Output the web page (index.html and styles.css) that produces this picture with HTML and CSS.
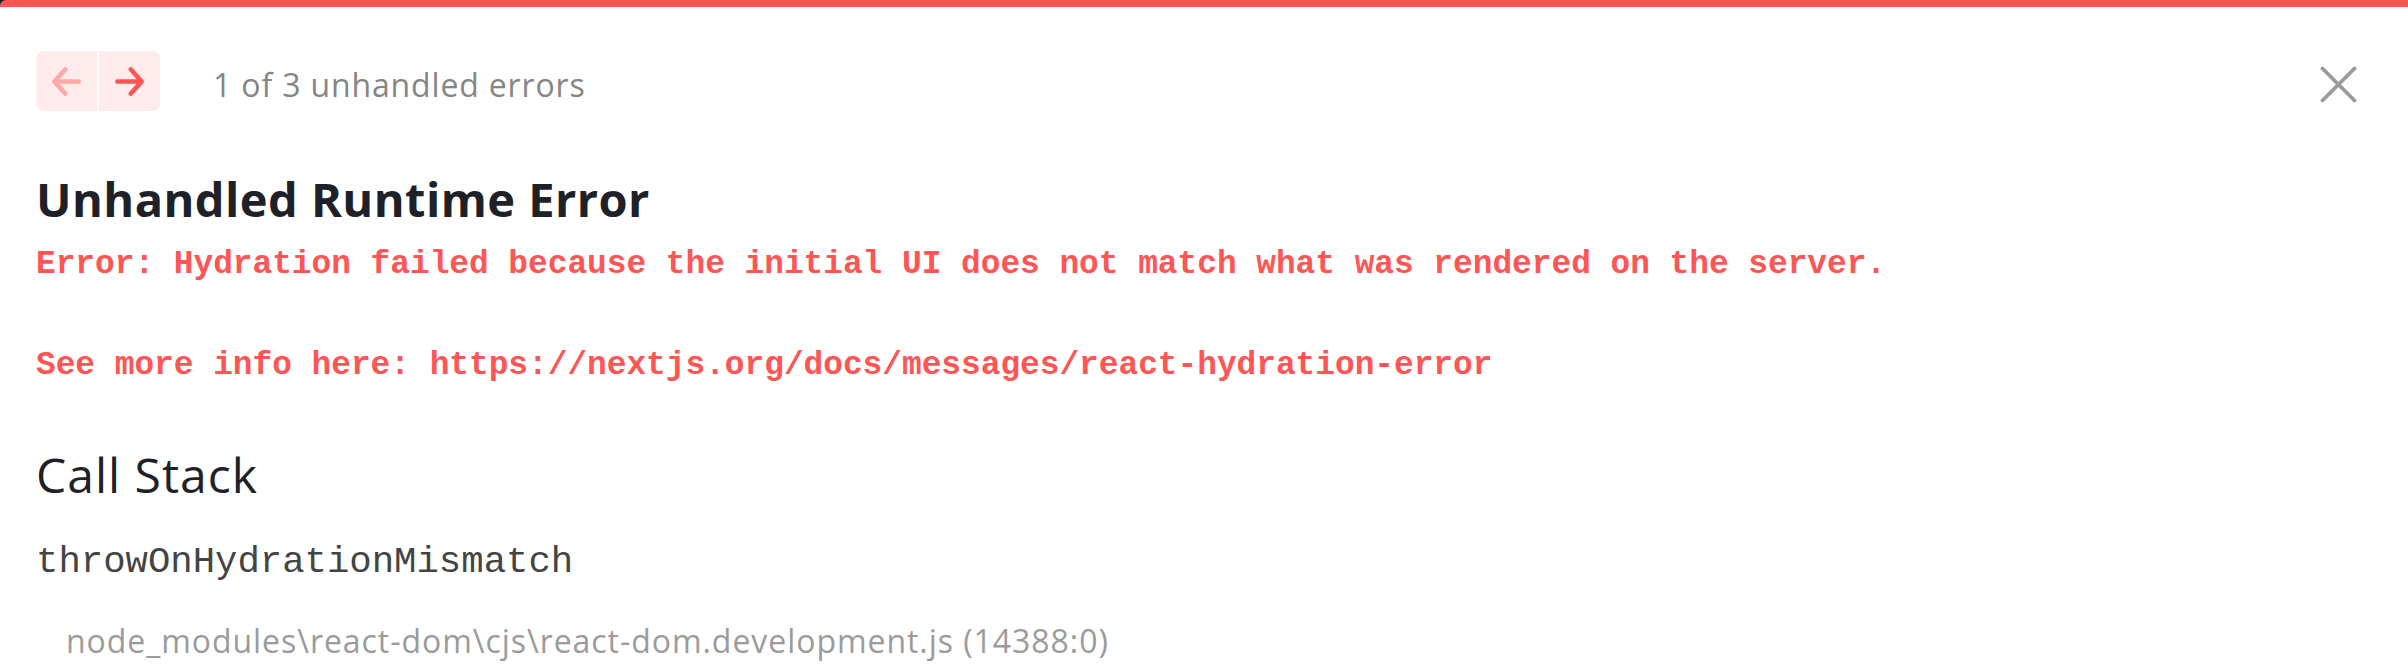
FILE: index.html
```html
<!DOCTYPE html>
<html lang="en">
<head>
<meta charset="utf-8">
<title>Unhandled Runtime Error</title>
<link rel="stylesheet" href="styles.css">
</head>
<body>
<div class="dialog">
  <header class="dialog-header">
    <div class="nav-group">
      <nav class="pager">
        <button class="pager-btn pager-prev" type="button" aria-label="previous" disabled>
          <svg width="31" height="31" viewBox="0 0 14 14" fill="none"><path d="M6.5 1.5L1.5 7L6.5 12.5M1.5 7H12.5" stroke="currentColor" stroke-width="2" stroke-linecap="round" stroke-linejoin="round"/></svg>
        </button>
        <button class="pager-btn pager-next" type="button" aria-label="next">
          <svg width="31" height="31" viewBox="0 0 14 14" fill="none"><path d="M7.5 1.5L12.5 7L7.5 12.5M12.5 7H1.5" stroke="currentColor" stroke-width="2" stroke-linecap="round" stroke-linejoin="round"/></svg>
        </button>
      </nav>
      <span class="pager-label">1 of 3 unhandled errors</span>
    </div>
    <button class="close-btn" type="button" aria-label="close">
      <svg width="37" height="37" viewBox="0 0 37 37" fill="none"><path d="M2.5 2.5L34.5 34.5M34.5 2.5L2.5 34.5" stroke="currentColor" stroke-width="3.8" stroke-linecap="round"/></svg>
    </button>
  </header>
  <section class="dialog-body">
    <h1 class="title">Unhandled Runtime Error</h1>
    <p class="error-message">Error: Hydration failed because the initial UI does not match what was rendered on the server.

See more info here: https://nextjs.org/docs/messages/react-hydration-error</p>
    <h2 class="stack-title">Call Stack</h2>
    <div class="frame">
      <div class="frame-name">throwOnHydrationMismatch</div>
      <div class="frame-file">node_modules\react-dom\cjs\react-dom.development.js (14388:0)</div>
    </div>
  </section>
</div>
</body>
</html>
```

FILE: styles.css
```css
html {
  background: #1b1b2b;
}
body {
  margin: 0;
  font-family: "Open Sans", "Noto Sans", sans-serif;
}
.dialog {
  background: #ffffff;
  border-top: 7px solid #ff5555;
  border-top-left-radius: 6px;
  height: 658px;
  overflow: hidden;
}
.dialog-header {
  display: flex;
  align-items: center;
  justify-content: space-between;
  padding: 44px 51px 0 36px;
}
.nav-group {
  display: flex;
  align-items: center;
}
.pager {
  display: flex;
  gap: 2px;
}
.pager-btn {
  width: 61px;
  height: 60px;
  border: none;
  padding: 0;
  margin: 0;
  background: #ffebeb;
  display: flex;
  align-items: center;
  justify-content: center;
  cursor: pointer;
}
.pager-prev {
  border-radius: 8px 0 0 8px;
  color: #ffa8a8;
}
.pager-next {
  border-radius: 0 8px 8px 0;
  color: #ff5555;
}
.pager-label {
  margin-left: 53px;
  margin-top: 8px;
  font-size: 32px;
  letter-spacing: 0.85px;
  line-height: 48px;
  color: #858585;
}
.close-btn {
  border: none;
  background: none;
  padding: 0;
  margin-top: 7px;
  width: 37px;
  height: 37px;
  color: #9a9a9a;
  display: flex;
}
.dialog-body {
  padding: 60px 36px 0 36px;
}
.title {
  margin: 0;
  font-size: 47px;
  line-height: 56px;
  font-weight: 700;
  letter-spacing: 0.45px;
  color: #1f2128;
}
.error-message {
  margin: 13px 0 0 0;
  font-family: "Liberation Mono", "DejaVu Sans Mono", monospace;
  font-weight: 700;
  font-size: 32.8px;
  line-height: 50.5px;
  color: #ff5555;
  white-space: pre-wrap;
}
.stack-title {
  margin: 55px 0 0 0;
  font-size: 48px;
  line-height: 56px;
  font-weight: 500;
  letter-spacing: 1px;
  color: #1f2128;
}
.frame {
  margin-top: 31px;
}
.frame-name {
  font-family: "Liberation Mono", "DejaVu Sans Mono", monospace;
  font-size: 37.3px;
  line-height: 56px;
  color: #444444;
}
.frame-file {
  margin-top: 27px;
  padding-left: 30px;
  font-size: 32px;
  letter-spacing: 0.95px;
  line-height: 48px;
  color: #9b9b9b;
}
```
